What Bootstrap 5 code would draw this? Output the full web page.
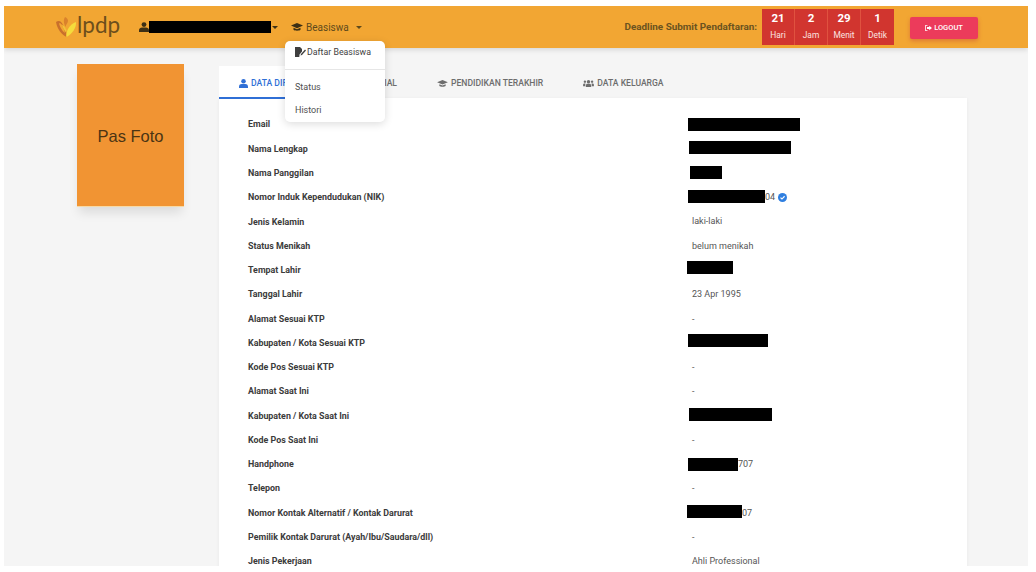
<!DOCTYPE html>
<html lang="en">

<head>
	<meta charset="utf-8">
	<meta name="viewport" content="width=device-width, initial-scale=1">
	<title>LPDP — Data Diri</title>
	<link href="https://cdn.jsdelivr.net/npm/bootstrap@5.3.5/dist/css/bootstrap.min.css" rel="stylesheet">
	<style>
		html, body { height: 572px; overflow: hidden; background: #fff; }
		body { font-family: Roboto, "Liberation Sans", sans-serif; color: #4a4a4a; }
		svg { fill: currentColor; flex: none; }

		.frame { position: relative; margin: 6px 8px 0 4px; height: 560px; overflow: hidden; background: #f5f5f5; }

		.topbar { height: 42px; padding: 0 50px 0 52px; background: #f2a633; color: #5f4a1c; box-shadow: 0 2px 5px rgba(0, 0, 0, .12); position: relative; z-index: 2; }
		.brand-text { font-family: Lato, sans-serif; font-weight: 400; font-size: 22.5px; line-height: 1; color: #6d4f1c; margin: 0 0 3px 0; width: 42px; }
		.who { margin-left: 20px; color: #3d3015; }
		.redact { display: inline-block; background: #000; height: 13px; vertical-align: middle; }
		.who .redact { width: 122px; height: 12px; margin-left: 0; }
		.who .caret-down { margin-left: 1px; }
		.scholar { margin-left: 13px; font-size: 10px; color: #5f4a1c; gap: 3px; }
		.scholar svg { color: #3d3015; }
		.caret-down { width: 0; height: 0; border: 3px solid transparent; border-top-color: currentColor; border-bottom: 0; }

		.deadline { font-size: 9.9px; font-weight: 700; color: #6b5320; margin-right: 5px; white-space: nowrap; }
		.count-cell { width: 33px; height: 36px; background: #d1352f; color: #fff; border-right: 1px solid #e0523f; text-align: center; }
		.count-cell:last-child { border-right: 0; }
		.count-num { font-size: 11.5px; font-weight: 700; line-height: 13px; margin-top: 3px; }
		.count-lbl { font-size: 8.4px; line-height: 12px; margin-top: 4px; color: #fbe4e0; }
		.btn-keluar { width: 68px; height: 22px; margin: 2px 0 0 16px; padding: 0; font-size: 7.5px; font-weight: 500; color: #fff; background: #ec3b5b; border: 0; border-radius: 2px; box-shadow: 0 2px 4px rgba(180, 40, 60, .35); gap: 2px; }

		.menu-beasiswa { position: absolute; left: 281px; top: 35px; width: 100px; height: 81px; z-index: 5; background: #fff; border-radius: 5px; box-shadow: 0 2px 8px rgba(0, 0, 0, .14); font-size: 9px; color: #4f4f4f; }
		.menu-row { position: absolute; left: 10px; line-height: 12px; white-space: nowrap; }
		.menu-first { top: 5px; font-size: 8.8px; color: #3f3f3f; gap: 1px; }
		.menu-second { top: 40px; }
		.menu-third { top: 63px; }
		.menu-line { position: absolute; left: 0; right: 0; top: 28px; border-top: 1px solid #e6e6e6; }

		.pas-foto { width: 107px; height: 143px; margin: 16px 0 0 73px; background: #f19433; color: #4b3414; font-family: "Liberation Sans", sans-serif; font-size: 16.5px; padding-top: 60px; text-align: center; border-bottom: 1px solid #f7d9a5; box-shadow: 0 8px 10px -2px rgba(0, 0, 0, .1); flex: none; }
		.data-col { width: 748px; margin: 20px 0 0 35px; flex: none; }

		.tab-strip { height: 30px; }
		.tab-item { padding: 0 20px; height: 30px; font-size: 8.6px; font-weight: 500; color: #6d6d6d; gap: 3px; white-space: nowrap; }
		.tab-item.on { background: #fff; color: #2f6fd6; border-bottom: 2px solid #2f6fd6; width: 101px; height: 33px; margin-top: -2px; padding-top: 3px; position: relative; }
		.tab-hidden { width: 77px; justify-content: flex-end; padding: 0; margin-right: 20px; }

		.data-sheet { background: #fff; padding: 15px 0 0 29px; box-shadow: 0 1px 4px rgba(0, 0, 0, .05); height: 480px; }
		.data-row { height: 24.28px; font-size: 9px; }
		.data-key { width: 444px; font-weight: 700; color: #3b3b3b; font-size: 8.9px; flex: none; }
		.data-val { color: #555; white-space: nowrap; }
		.verified { color: #2f7fe0; margin-left: 3px; }

		.r-email { width: 112px; margin-left: -4px; margin-top: -2px; }
		.r-nama { width: 102px; margin-left: -3px; margin-top: -3px; }
		.r-panggilan { width: 32px; margin-left: -2px; margin-top: -3px; }
		.r-nik { width: 77px; margin-left: -4px; margin-top: -3px; }
		.r-tempat { width: 46px; margin-left: -5px; margin-top: -6px; }
		.r-kab { width: 80px; margin-left: -4px; margin-top: -5px; }
		.r-kini { width: 83px; margin-left: -3px; margin-top: -4px; }
		.r-hp { width: 50px; margin-left: -4px; }
		.r-darurat { width: 55px; margin-left: -5px; margin-top: -3px; }
	</style>
</head>

<body>
	<div class="frame">
		<nav class="topbar d-flex align-items-center">
			<svg width="21" height="20" viewBox="0 0 21 20">
				<path fill="#c9702c" d="M0 5c2-1.500 4-1 5 0 2 2 3 5 5 8l.5 7C6 18 1 12 0 5z" />
				<path fill="#f2a633" d="M3 6.500c1-.5 2 0 3 1.500 1 2 2.500 5 3 8C6 14 4 10 3 6.500z" />
				<path fill="#d9822c" d="M9 0c2 1 3 2 3 4s-2 3-2.500 6C8 7 7 3 9 0z" />
				<path fill="#f5dc3c" d="M20 5c.5 6-4 12-9.500 15-.5-2 0-5 1.500-8 2-3.500 5-6 8-7z" />
				<path fill="#f2c53a" d="M6 7.500c2 1 3.500 3 4.500 6l-.5 2C8 13 6.500 10 6 7.500z" />
			</svg>
			<span class="brand-text">lpdp</span>
			<span class="who d-flex align-items-center">
				<svg width="10" height="10" viewBox="0 0 10 10"><circle cx="5" cy="2.600" r="2.400" /><path d="M0 10V8.400C0 6.500 1.500 5.600 3 5.600h4c1.500 0 3 .9 3 2.800V10z" /></svg>
				<span class="redact"></span>
				<span class="caret-down"></span>
			</span>
			<span class="scholar d-flex align-items-center">
				<svg width="12" height="10" viewBox="0 0 12 10"><path d="M6 1 0 3.600 6 6.200l6-2.600z" /><path d="M2.500 5.800v2C3.500 9 8.500 9 9.500 7.800v-2L6 7.300z" /></svg>
				<span>Beasiswa</span>
				<span class="caret-down ms-1"></span>
			</span>
			<div class="d-flex align-items-center ms-auto">
				<span class="deadline">Deadline Submit Pendaftaran:</span>
				<div class="d-flex">
					<div class="count-cell"><div class="count-num">21</div><div class="count-lbl">Hari</div></div>
					<div class="count-cell"><div class="count-num">2</div><div class="count-lbl">Jam</div></div>
					<div class="count-cell"><div class="count-num">29</div><div class="count-lbl">Menit</div></div>
					<div class="count-cell"><div class="count-num">1</div><div class="count-lbl">Detik</div></div>
				</div>
				<button class="btn btn-keluar d-flex align-items-center justify-content-center">
					<svg width="7" height="6" viewBox="0 0 7 6"><path d="M2.500 0H1C.4 0 0 .4 0 1v4c0 .6.4 1 1 1h1.500v-.8H.8V.8h1.700z" /><path d="M4.200.8 7 3 4.200 5.200V4H2V2h2.200z" /></svg>
					LOGOUT
				</button>
			</div>
		</nav>

		<div class="menu-beasiswa">
			<span class="menu-row menu-first d-flex align-items-center">
				<svg width="11" height="10" viewBox="0 0 11 10"><path d="M0 0h5l2 2v2.500L4.500 7.500 4.300 10H0z" /><path d="M6 7 10 2.500l1 1L7 8l-1.500.5z" /></svg>
				Daftar Beasiswa
			</span>
			<div class="menu-line"></div>
			<span class="menu-row menu-second">Status</span>
			<span class="menu-row menu-third">Histori</span>
		</div>

		<div class="d-flex">
			<div class="pas-foto">Pas Foto</div>
			<div class="data-col">
				<div class="tab-strip d-flex">
					<div class="tab-item on d-flex align-items-center">
						<svg width="9" height="9" viewBox="0 0 10 10"><circle cx="5" cy="2.600" r="2.500" /><path d="M0 10V8.400C0 6.500 1.500 5.600 3 5.600h4c1.500 0 3 .9 3 2.800V10z" /></svg>
						DATA DIRI
					</div>
					<div class="tab-item tab-hidden d-flex align-items-center">DATA SOSIAL</div>
					<div class="tab-item d-flex align-items-center">
						<svg width="11" height="9" viewBox="0 0 12 10"><path d="M6 1 0 3.600 6 6.200l6-2.600z" /><path d="M2.500 5.800v2C3.500 9 8.500 9 9.500 7.800v-2L6 7.300z" /></svg>
						PENDIDIKAN TERAKHIR
					</div>
					<div class="tab-item d-flex align-items-center">
						<svg width="11" height="9" viewBox="0 0 12 10"><circle cx="6" cy="3" r="1.900" /><circle cx="2" cy="3" r="1.300" /><circle cx="10" cy="3" r="1.300" /><path d="M3 9V7.500C3 6 4 5.400 5 5.400h2c1 0 2 .6 2 2.100V9z" /><path d="M0 8V6.500C0 5.400.8 5 1.600 5h1L2.300 8zM12 8V6.500C12 5.400 11.200 5 10.400 5h-1l.3 3z" /></svg>
						DATA KELUARGA
					</div>
				</div>

				<div class="data-sheet">
					<div class="data-row d-flex align-items-center"><span class="data-key">Email</span><span class="data-val"><span class="redact r-email"></span></span></div>
					<div class="data-row d-flex align-items-center"><span class="data-key">Nama Lengkap</span><span class="data-val"><span class="redact r-nama"></span></span></div>
					<div class="data-row d-flex align-items-center"><span class="data-key">Nama Panggilan</span><span class="data-val"><span class="redact r-panggilan"></span></span></div>
					<div class="data-row d-flex align-items-center"><span class="data-key">Nomor Induk Kependudukan (NIK)</span><span class="data-val d-flex align-items-center"><span class="redact r-nik"></span>04<svg class="verified" width="9" height="9" viewBox="0 0 10 10"><circle cx="5" cy="5" r="5" /><path fill="none" stroke="#fff" stroke-width="1.300" d="M2.800 5.100 4.400 6.700 7.300 3.600" /></svg></span></div>
					<div class="data-row d-flex align-items-center"><span class="data-key">Jenis Kelamin</span><span class="data-val">laki-laki</span></div>
					<div class="data-row d-flex align-items-center"><span class="data-key">Status Menikah</span><span class="data-val">belum menikah</span></div>
					<div class="data-row d-flex align-items-center"><span class="data-key">Tempat Lahir</span><span class="data-val"><span class="redact r-tempat"></span></span></div>
					<div class="data-row d-flex align-items-center"><span class="data-key">Tanggal Lahir</span><span class="data-val">23 Apr 1995</span></div>
					<div class="data-row d-flex align-items-center"><span class="data-key">Alamat Sesuai KTP</span><span class="data-val">-</span></div>
					<div class="data-row d-flex align-items-center"><span class="data-key">Kabupaten / Kota Sesuai KTP</span><span class="data-val"><span class="redact r-kab"></span></span></div>
					<div class="data-row d-flex align-items-center"><span class="data-key">Kode Pos Sesuai KTP</span><span class="data-val">-</span></div>
					<div class="data-row d-flex align-items-center"><span class="data-key">Alamat Saat Ini</span><span class="data-val">-</span></div>
					<div class="data-row d-flex align-items-center"><span class="data-key">Kabupaten / Kota Saat Ini</span><span class="data-val"><span class="redact r-kini"></span></span></div>
					<div class="data-row d-flex align-items-center"><span class="data-key">Kode Pos Saat Ini</span><span class="data-val">-</span></div>
					<div class="data-row d-flex align-items-center"><span class="data-key">Handphone</span><span class="data-val d-flex align-items-center"><span class="redact r-hp"></span>707</span></div>
					<div class="data-row d-flex align-items-center"><span class="data-key">Telepon</span><span class="data-val">-</span></div>
					<div class="data-row d-flex align-items-center"><span class="data-key">Nomor Kontak Alternatif / Kontak Darurat</span><span class="data-val d-flex align-items-center"><span class="redact r-darurat"></span>07</span></div>
					<div class="data-row d-flex align-items-center"><span class="data-key">Pemilik Kontak Darurat (Ayah/Ibu/Saudara/dll)</span><span class="data-val">-</span></div>
					<div class="data-row d-flex align-items-center"><span class="data-key">Jenis Pekerjaan</span><span class="data-val">Ahli Professional</span></div>
				</div>
			</div>
		</div>
	</div>
	<script src="https://cdn.jsdelivr.net/npm/bootstrap@5.3.5/dist/js/bootstrap.bundle.min.js"></script>
</body>

</html>
